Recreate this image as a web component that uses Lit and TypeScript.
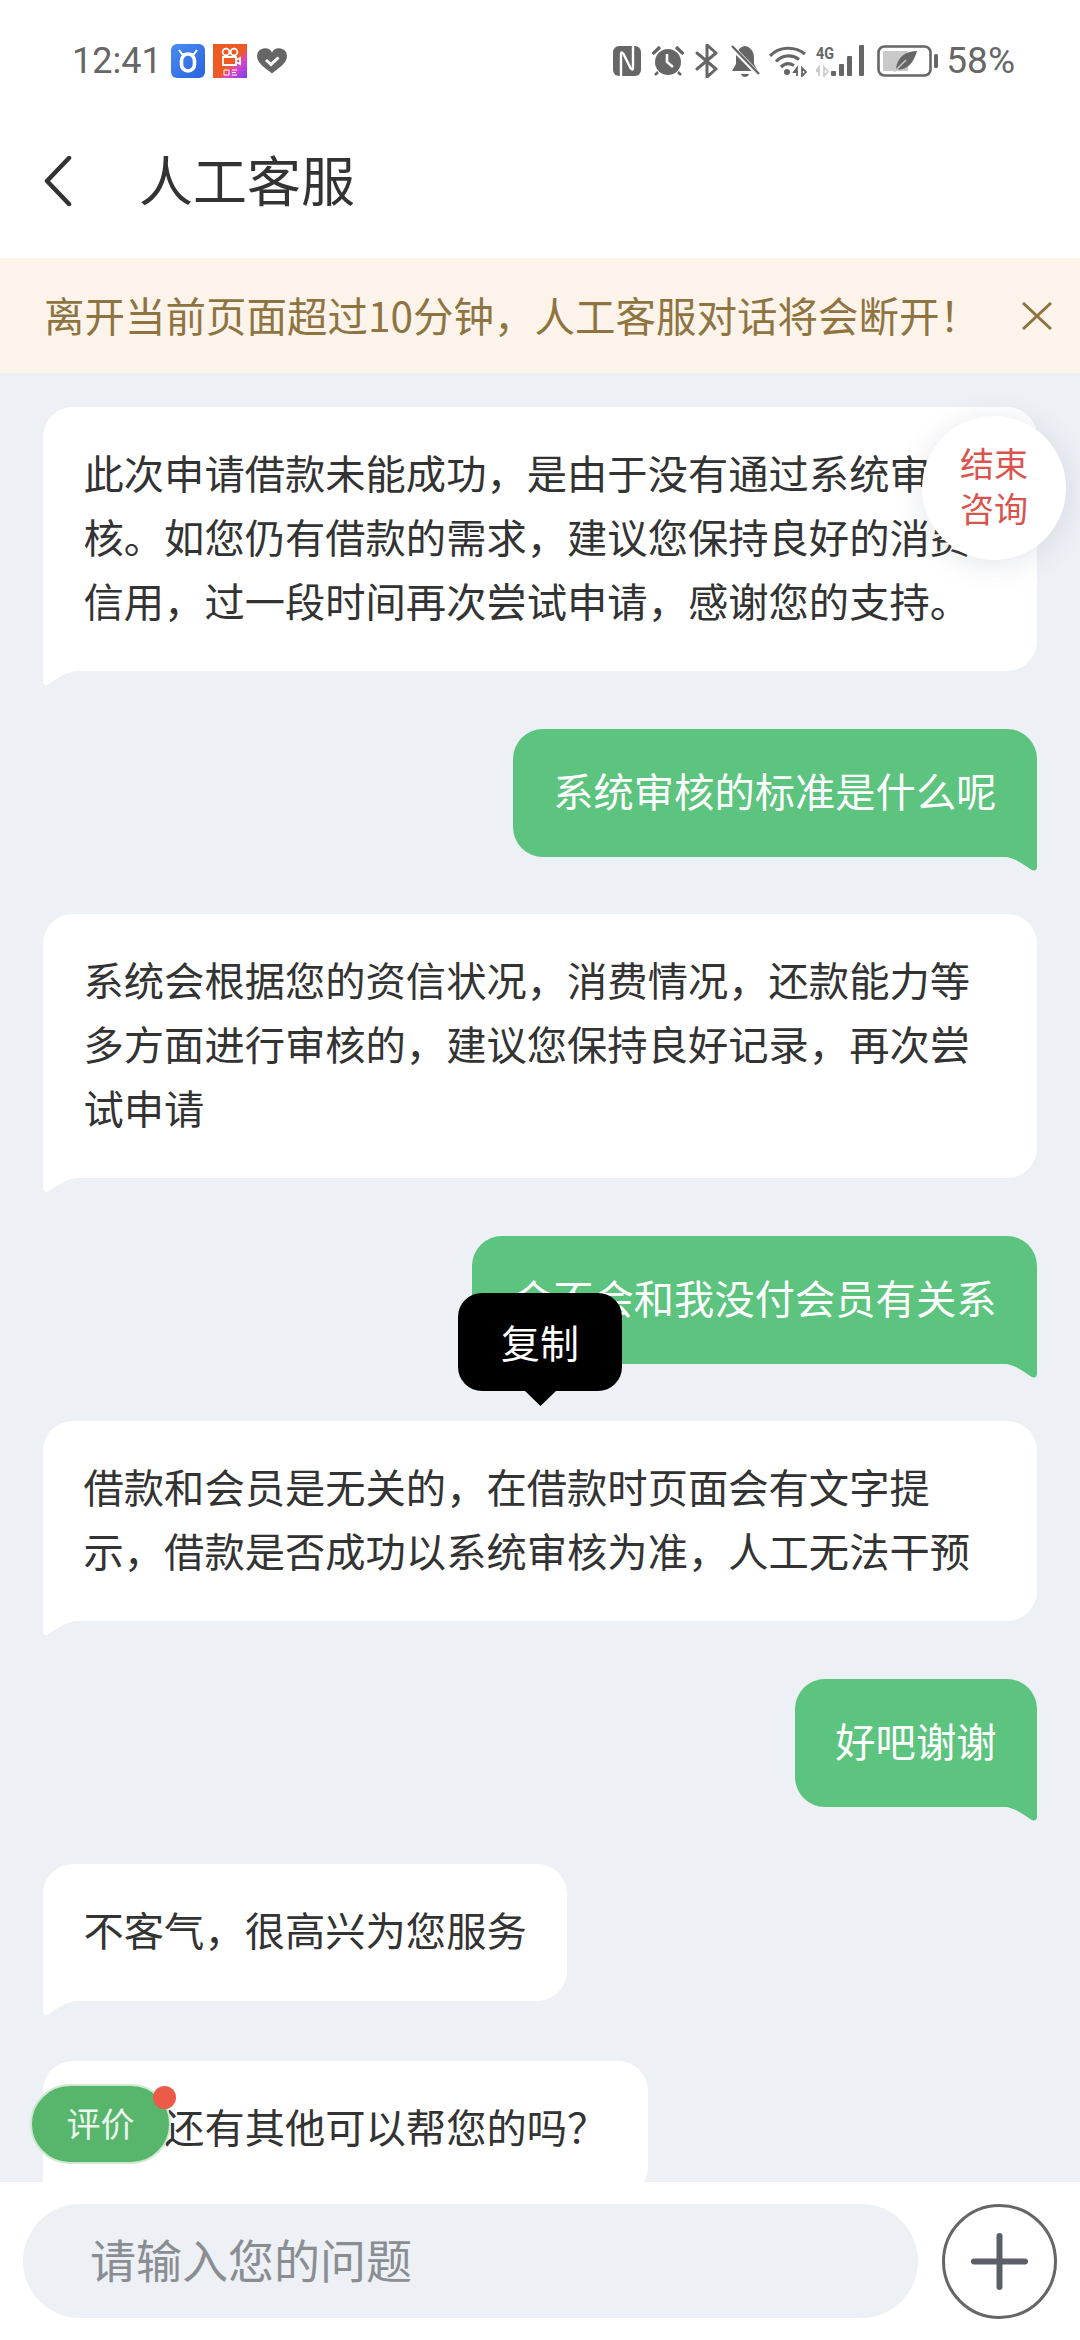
import { html, css, LitElement } from 'lit';
import { customElement } from 'lit/decorators.js';

type Msg = { text: string; me?: boolean };

const messages: Msg[] = [
  { text: '此次申请借款未能成功，是由于没有通过系统审核。如您仍有借款的需求，建议您保持良好的消费信用，过一段时间再次尝试申请，感谢您的支持。' },
  { text: '系统审核的标准是什么呢', me: true },
  { text: '系统会根据您的资信状况，消费情况，还款能力等多方面进行审核的，建议您保持良好记录，再次尝试申请' },
  { text: '会不会和我没付会员有关系', me: true },
  { text: '借款和会员是无关的，在借款时页面会有文字提示，借款是否成功以系统审核为准，人工无法干预' },
  { text: '好吧谢谢', me: true },
  { text: '不客气，很高兴为您服务' },
  { text: '请问还有其他可以帮您的吗？' },
];

@customElement('app-root')
export class AppRoot extends LitElement {
  static styles = css`
    :host {
      display: flex;
      flex-direction: column;
      width: 1080px;
      height: 2340px;
      overflow: hidden;
      background: #fff;
      font-family: 'Noto Sans CJK SC', 'Noto Sans', sans-serif;
      color: #333;
    }

    .status {
      display: flex;
      align-items: center;
      height: 34px;
      padding: 44px 65px 0 72px;
      flex: none;
    }
    .time, .pct {
      font-family: Roboto, sans-serif;
      font-size: 36px;
      line-height: 34px;
      color: #666;
    }
    .pct { font-size: 37px; margin-left: 8px; }
    .status svg { display: block; flex: none; }
    .left-icons { display: flex; align-items: center; gap: 8px; margin-left: 9px; }
    .right-icons { display: flex; align-items: center; margin-left: auto; }

    .nav {
      display: flex;
      align-items: center;
      height: 154px;
      margin-top: 26px;
      padding-left: 44px;
      flex: none;
    }
    .title {
      margin-left: 67px;
      margin-top: -5px;
      font-size: 54px;
      line-height: 60px;
    }

    .banner {
      display: flex;
      align-items: center;
      justify-content: space-between;
      height: 115px;
      padding: 0 28px 0 44px;
      background: #fcf4ea;
      color: #8f7442;
      font-size: 40.5px;
      flex: none;
    }
    .banner span { margin-top: -3px; }

    .chat {
      position: relative;
      flex: 1;
      min-height: 0;
      overflow: hidden;
      display: flex;
      flex-direction: column;
      align-items: flex-start;
      gap: 57.5px;
      padding: 34px 43px 0;
      background: #edf0f5;
    }

    .bubble {
      position: relative;
      flex: none;
      box-sizing: border-box;
      max-width: 994px;
      padding: 33px 40.5px 39px;
      background: #fff;
      border-radius: 30px 30px 30px 0;
      font-size: 40.3px;
      line-height: 64px;
      color: #333;
    }
    .bubble:nth-child(7) { padding-bottom: 40px; }
    .bubble:nth-child(8) { margin-top: 2px; }
    .bubble::after {
      content: '';
      position: absolute;
      top: 100%;
      left: 0;
      width: 40px;
      height: 15px;
      margin-top: -1px;
      background: inherit;
      clip-path: path('M0 0H40C24 1 16 7 6 14C3 16 0 15 0 11Z');
    }
    .bubble.me {
      align-self: flex-end;
      padding: 29px 40.5px 35px;
      background: #5cc47e;
      color: #fff;
      border-radius: 30px 30px 0 30px;
    }
    .bubble.me::after {
      left: auto;
      right: 0;
      clip-path: path('M40 0H0C16 1 24 7 34 14C37 16 40 15 40 11Z');
    }

    .end {
      position: absolute;
      top: 43px;
      left: 922px;
      width: 144px;
      height: 144px;
      box-sizing: border-box;
      padding-bottom: 6px;
      display: flex;
      align-items: center;
      justify-content: center;
      text-align: center;
      border-radius: 50%;
      background: #fff;
      box-shadow: 0 4px 30px rgba(90, 100, 130, 0.16);
      color: #d9534f;
      font-size: 34px;
      line-height: 45px;
    }

    .tip {
      position: absolute;
      top: 920px;
      left: 458px;
      width: 164px;
      height: 98px;
      box-sizing: border-box;
      padding-bottom: 3px;
      display: flex;
      align-items: center;
      justify-content: center;
      background: #000;
      color: #fff;
      border-radius: 24px;
      font-size: 39px;
    }
    .tip::after {
      content: '';
      position: absolute;
      top: 100%;
      left: 67px;
      width: 31px;
      height: 15px;
      background: #000;
      clip-path: polygon(0 0, 100% 0, 50% 100%);
    }

    .rate {
      position: absolute;
      top: 1711px;
      left: 30px;
      box-sizing: border-box;
      width: 141px;
      height: 80px;
      padding-bottom: 3px;
      display: flex;
      align-items: center;
      justify-content: center;
      border-radius: 40px;
      background: #58b56c;
      border: 2px solid #cfe8d3;
      color: #eaf7ec;
      font-size: 34px;
    }
    .rate::after {
      content: '';
      position: absolute;
      top: 0;
      left: 121px;
      width: 23px;
      height: 23px;
      border-radius: 50%;
      background: #ec5a4a;
    }

    .footer {
      display: flex;
      align-items: center;
      gap: 24px;
      height: 158px;
      padding: 0 23px;
      background: #fff;
      flex: none;
    }
    .input {
      flex: 1;
      height: 114px;
      box-sizing: border-box;
      padding: 0 0 6px 67px;
      display: flex;
      align-items: center;
      border-radius: 57px;
      background: #edf0f5;
      color: #8a8d92;
      font-size: 46px;
    }
    .plus {
      display: block;
      flex: none;
      width: 115px;
      height: 115px;
    }
  `;

  private leftIcons() {
    return html`<div class="left-icons">
      <svg width="34" height="34" viewBox="0 0 34 34">
        <defs><linearGradient id="bl" x1="0" y1="0" x2="1" y2="1"><stop offset="0" stop-color="#4a8cf0"/><stop offset="1" stop-color="#2a62e0"/></linearGradient></defs>
        <rect width="34" height="34" rx="6" fill="url(#bl)"/>
        <path d="M8 6l3 4h12l3-4" fill="none" stroke="#fff" stroke-width="2"/>
        <rect x="10.500" y="10" width="13" height="17" rx="6.500" fill="none" stroke="#fff" stroke-width="3.600"/>
      </svg>
      <svg width="34" height="34" viewBox="0 0 34 34">
        <defs><linearGradient id="or" x1="0" y1="0" x2="1" y2="1"><stop offset="0.55" stop-color="#ee5a24"/><stop offset="0.7" stop-color="#d846c8"/><stop offset="1" stop-color="#7a3cf0"/></linearGradient></defs>
        <rect width="34" height="34" fill="url(#or)"/>
        <circle cx="13" cy="8" r="3.400" fill="none" stroke="#fff" stroke-width="1.800"/>
        <circle cx="21" cy="8" r="3.400" fill="none" stroke="#fff" stroke-width="1.800"/>
        <path d="M10 13h13v8H10zM23 16l4-2v6l-4-2z" fill="none" stroke="#fff" stroke-width="1.800"/>
        <path d="M11 26h5v5h-5zM19 26h5M19 28.500h4M19 31h5" fill="none" stroke="#fff" stroke-width="1"/>
      </svg>
      <svg width="30" height="26" viewBox="0 0 30 26" style="margin-left:2px">
        <path d="M15 25.500C10 21 0 16 0 8A8 8 0 0 1 15 4.500A8 8 0 0 1 30 8C30 16 20 21 15 25.500Z" fill="#666"/>
        <path d="M9 12l5 4.500 7.500-7" fill="none" stroke="#fff" stroke-width="3"/>
      </svg>
    </div>`;
  }

  private rightIcons() {
    return html`<div class="right-icons">
      <svg width="28" height="30" viewBox="0 0 28 30">
        <rect width="28" height="30" rx="6" fill="#666"/>
        <path d="M8 30V8Q8 5 10.500 8L17.500 22Q20 25 20 22V0" fill="none" stroke="#fff" stroke-width="2.400"/>
      </svg>
      <svg width="32" height="30" viewBox="0 0 32 30" style="margin-left:11px">
        <circle cx="16" cy="16" r="13" fill="#666"/>
        <path d="M0.500 8L8 1M24 1L31.500 8" stroke="#666" stroke-width="3.400" fill="none"/>
        <path d="M6 26L3 29M26 26L29 29" stroke="#666" stroke-width="2.600" fill="none"/>
        <path d="M15 8V16L21 21" stroke="#fff" stroke-width="2.600" fill="none"/>
      </svg>
      <svg width="24" height="34" viewBox="0 0 24 34" style="margin-left:11px">
        <path d="M2 9L21 25L12 33V1L21 9L2 25" fill="none" stroke="#666" stroke-width="3" stroke-linejoin="round" stroke-linecap="round"/>
      </svg>
      <svg width="30" height="33" viewBox="0 0 30 33" style="margin-left:11px">
        <path d="M15 1C21 2 24 7 24 13V19L28 26H2L6 19V13C6 7 9 2 15 1Z" fill="#666"/>
        <path d="M11 29H19C18 33 12 33 11 29Z" fill="#666"/>
        <path d="M1 1L29 30" stroke="#fff" stroke-width="5"/>
        <path d="M2 1L29 29" stroke="#666" stroke-width="2.400"/>
      </svg>
      <svg width="38" height="32" viewBox="0 0 38 32" style="margin-left:9px">
        <path d="M1 11C10 1 26 1 36 9" fill="none" stroke="#666" stroke-width="3.200"/>
        <path d="M7 16.500C13 10 23 9 30 14.500" fill="none" stroke="#666" stroke-width="3.200"/>
        <path d="M12 22C16 18 21 18 25 20.500" fill="none" stroke="#666" stroke-width="3.200"/>
        <circle cx="18" cy="27" r="3" fill="#666"/>
        <path d="M28 31V23L25 27H29M33 23V31L37 27Z" fill="none" stroke="#666" stroke-width="1.800"/>
      </svg>
      <svg width="50" height="32" viewBox="0 0 50 32" style="margin-left:9px">
        <text x="0" y="14" font-family="Roboto, sans-serif" font-size="16" font-weight="700" fill="#666" textLength="18" lengthAdjust="spacingAndGlyphs">4G</text>
        <path d="M3 31V22L0 26H4M8 22V31L12 26.500Z" fill="none" stroke="#ccc" stroke-width="1.800"/>
        <rect x="15" y="26" width="5" height="5" rx="1" fill="#666"/>
        <rect x="23" y="19" width="5" height="12" rx="1" fill="#666"/>
        <rect x="31" y="11" width="5" height="20" rx="1" fill="#666"/>
        <rect x="43" y="0" width="5" height="31" rx="1" fill="#666"/>
      </svg>
      <svg width="61" height="32" viewBox="0 0 61 32" style="margin-left:11px">
        <rect x="1.500" y="1.500" width="52" height="29" rx="6" fill="none" stroke="#666" stroke-width="2.600"/>
        <rect x="6" y="6" width="25" height="20" rx="1" fill="#c9c9c9"/>
        <path d="M40 6C29 6 20 12 19 24C27 26 36 21 40 6Z" fill="#666"/>
        <path d="M17 27L29 15" stroke="#c9c9c9" stroke-width="1.400"/>
        <rect x="57" y="9" width="4" height="14" rx="1.500" fill="#666"/>
      </svg>
      <span class="pct">58%</span>
    </div>`;
  }

  render() {
    return html`
      <div class="status">
        <span class="time">12:41</span>
        ${this.leftIcons()}
        ${this.rightIcons()}
      </div>
      <div class="nav">
        <svg width="28" height="50" viewBox="0 0 28 50">
          <path d="M25 2L3 25L25 48" fill="none" stroke="#333" stroke-width="4.500" stroke-linecap="round" stroke-linejoin="round"/>
        </svg>
        <span class="title">人工客服</span>
      </div>
      <div class="banner">
        <span>离开当前页面超过10分钟，人工客服对话将会断开！</span>
        <svg width="30" height="28" viewBox="0 0 30 28">
          <path d="M1 1L29 27M29 1L1 27" stroke="#8f7442" stroke-width="3" fill="none"/>
        </svg>
      </div>
      <div class="chat">
        ${messages.map(m => html`<div class="bubble ${m.me ? 'me' : ''}">${m.text}</div>`)}
        <div class="end">结束<br />咨询</div>
        <div class="tip">复制</div>
        <div class="rate">评价</div>
      </div>
      <div class="footer">
        <div class="input">请输入您的问题</div>
        <svg class="plus" viewBox="0 0 115 115">
          <circle cx="57.500" cy="57.500" r="56" fill="none" stroke="#666" stroke-width="3"/>
          <path d="M32 57.500H83M57.500 32V83" stroke="#5b6068" stroke-width="6" stroke-linecap="round"/>
        </svg>
      </div>
    `;
  }
}
